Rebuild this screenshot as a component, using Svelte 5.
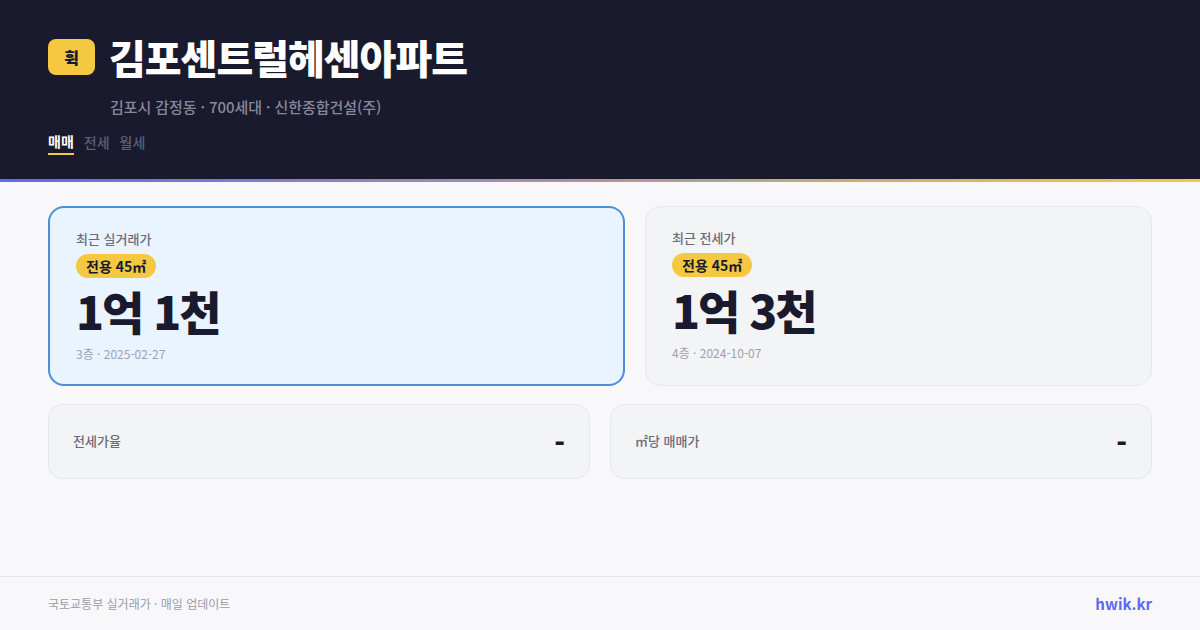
<script lang="ts">
	const tabs = [
		{ label: '매매', active: true },
		{ label: '전세', active: false },
		{ label: '월세', active: false }
	];
	const stats = [
		{ label: '전세가율', value: '-' },
		{ label: '㎡당 매매가', value: '-' }
	];
</script>

<div class="page" lang="ko">
	<header class="header">
		<div class="title-row">
			<div class="logo">휙</div>
			<h1>김포센트럴헤센아파트</h1>
		</div>
		<p class="sub">김포시 감정동 · 700세대 · 신한종합건설(주)</p>
		<nav class="tabs">
			{#each tabs as tab}
				<span class="tab" class:active={tab.active}>{tab.label}</span>
			{/each}
		</nav>
	</header>

	<main class="main">
		<div class="cards">
			<section class="card sale">
				<div class="card-label">최근 실거래가</div>
				<span class="badge">전용 45㎡</span>
				<div class="price">1억 1천</div>
				<div class="meta">3층 · 2025-02-27</div>
			</section>
			<section class="card rent">
				<div class="card-label">최근 전세가</div>
				<span class="badge">전용 45㎡</span>
				<div class="price">1억 3천</div>
				<div class="meta">4층 · 2024-10-07</div>
			</section>
		</div>
		<div class="stats">
			{#each stats as stat}
				<div class="stat">
					<span class="stat-label">{stat.label}</span>
					<span class="stat-value">{stat.value}</span>
				</div>
			{/each}
		</div>
	</main>

	<footer class="footer">
		<span class="source">국토교통부 실거래가 · 매일 업데이트</span>
		<span class="brand">hwik.kr</span>
	</footer>
</div>

<style>
	:global(body) {
		margin: 0;
	}

	.page {
		width: 1200px;
		height: 630px;
		display: flex;
		flex-direction: column;
		background: #f8f8fb;
		font-family: 'Noto Sans CJK KR', sans-serif;
		overflow: hidden;
	}

	.header {
		height: 179px;
		box-sizing: border-box;
		padding: 31px 48px 0;
		background: #1a1a2e;
		position: relative;
		flex: none;
		margin-bottom: 3px;
	}

	.header::after {
		content: '';
		position: absolute;
		left: 0;
		right: 0;
		top: 100%;
		height: 3px;
		background: linear-gradient(90deg, #6366f1, #f5c842);
	}

	.title-row {
		display: flex;
		align-items: center;
		gap: 14px;
		height: 52px;
	}

	.logo {
		width: 47px;
		height: 36px;
		border-radius: 8px;
		background: #f5c842;
		color: #1a1a2e;
		font-size: 16px;
		font-weight: 900;
		display: grid;
		place-items: center;
		flex: none;
	}

	h1 {
		margin: 0;
		font-size: 40px;
		line-height: 52px;
		font-weight: 900;
		letter-spacing: -1px;
		color: #fff;
	}

	.sub {
		margin: 13px 0 0 62px;
		font-size: 15px;
		line-height: 22px;
		font-weight: 500;
		letter-spacing: -0.08px;
		color: #888899;
	}

	.tabs {
		display: flex;
		align-items: center;
		gap: 10px;
		margin-top: 13px;
	}

	.tab {
		font-size: 14px;
		line-height: 20px;
		font-weight: 500;
		color: #5f5f75;
		padding-bottom: 2px;
	}

	.tab.active {
		color: #fff;
		font-weight: 700;
		border-bottom: 2px solid #f5c842;
	}

	.main {
		flex: 1;
		padding: 24px 48px 0;
		display: flex;
		flex-direction: column;
		gap: 18px;
	}

	.cards {
		display: grid;
		grid-template-columns: 577px 507px;
		gap: 20px;
		height: 180px;
	}

	.card {
		box-sizing: border-box;
		height: 180px;
		border-radius: 16px;
		display: flex;
		flex-direction: column;
		align-items: flex-start;
	}

	.sale {
		background: #e9f4ff;
		border: 2px solid #4a90d9;
		padding: 21px 26px;
	}

	.rent {
		background: #f3f4f6;
		border: 1px solid #e5e7eb;
		padding: 21px 26px;
	}

	.card-label {
		font-size: 13px;
		line-height: 19px;
		font-weight: 500;
		color: #6b6b7b;
	}

	.badge {
		margin-top: 6px;
		padding: 0 10px;
		height: 24px;
		line-height: 24px;
		border-radius: 12px;
		background: #f5c842;
		color: #1a1a2e;
		font-size: 14px;
		font-weight: 700;
	}

	.price {
		margin-top: 2px;
		font-size: 46px;
		line-height: 60px;
		font-weight: 900;
		letter-spacing: -2px;
		color: #1a1a2e;
	}

	.meta {
		margin-top: 5px;
		font-size: 12px;
		line-height: 18px;
		color: #a0a0b0;
	}

	.stats {
		display: grid;
		grid-template-columns: 1fr 1fr;
		gap: 20px;
	}

	.stat {
		box-sizing: border-box;
		height: 75px;
		padding: 0 24px;
		border-radius: 14px;
		background: #f3f4f6;
		border: 1px solid #e5e7eb;
		display: flex;
		align-items: center;
		justify-content: space-between;
	}

	.stat-label {
		font-size: 13px;
		line-height: 17px;
		padding-bottom: 2px;
		font-weight: 500;
		color: #6b6b7b;
	}

	.stat-value {
		font-size: 28px;
		line-height: 36px;
		font-weight: 900;
		color: #1a1a2e;
	}

	.footer {
		height: 54px;
		box-sizing: border-box;
		flex: none;
		border-top: 1px solid #e5e5ec;
		padding: 0 48px;
		display: flex;
		align-items: center;
		justify-content: space-between;
	}

	.source {
		font-size: 12px;
		color: #9a9aaa;
	}

	.brand {
		font-size: 15px;
		font-weight: 700;
		color: #6366f1;
	}
</style>
